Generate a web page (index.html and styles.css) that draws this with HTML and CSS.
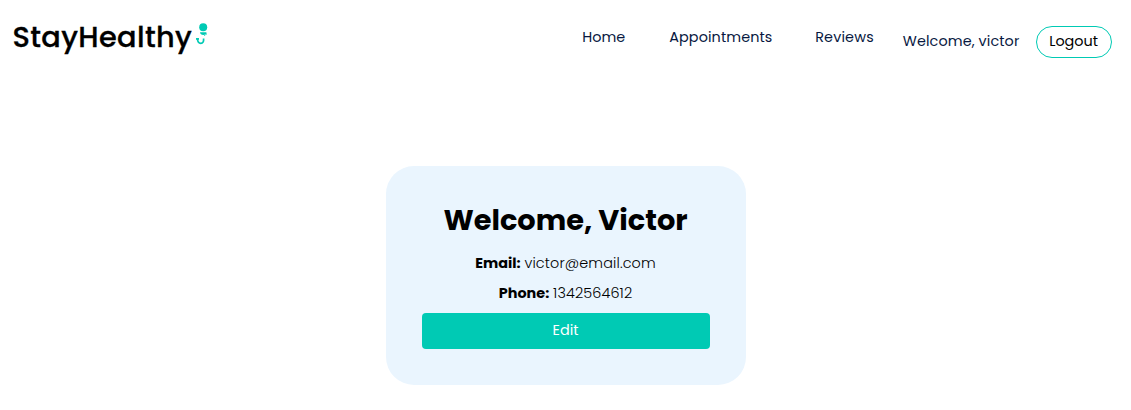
FILE: index.html
```html
<!DOCTYPE html>
<html lang="en">
<head>
<meta charset="utf-8">
<title>StayHealthy</title>
<link rel="stylesheet" href="styles.css">
</head>
<body>
<header class="navbar">
  <a class="logo"><span class="logo-text">StayHealthy</span><svg class="logo-icon" width="14" height="24" viewBox="0 0 14 24" fill="#00cab4">
    <circle cx="8.200" cy="4.300" r="4"/>
    <path d="M5 9.200h6.500c-.3 2-1.200 2.700-3.200 2.700S5.300 11.200 5 9.200z"/>
    <path d="M9.300 12.600l3-2.200" fill="none" stroke="#00cab4" stroke-width="1" stroke-dasharray="1.400 .5"/>
    <path d="M2.500 15.800c.1 3.300 1.400 4.600 3.300 4.600 2 0 3.100-1.600 2.800-4.900" fill="none" stroke="#00cab4" stroke-width="1.700"/>
    <path d="M1 15h3v1.800H1z"/>
  </svg></a>
  <nav class="menu">
    <a class="link home">Home</a>
    <a class="link appointments">Appointments</a>
    <a class="link reviews">Reviews</a>
    <span class="link greeting">Welcome, victor</span>
    <button class="logout">Logout</button>
  </nav>
</header>
<main class="page">
  <section class="card">
    <h1 class="title">Welcome, Victor</h1>
    <p class="detail email"><b>Email:</b> <span class="value">victor@email.com</span></p>
    <p class="detail phone"><b>Phone:</b> <span class="value">1342564612</span></p>
    <button class="edit">Edit</button>
  </section>
</main>
</body>
</html>
```
FILE: styles.css
```css
* { box-sizing: border-box; margin: 0; padding: 0; }
body {
  background: #fff;
  color: #000;
  font-family: Poppins, Inter, "Liberation Sans", sans-serif;
  font-size: 14.4px;
}
.navbar {
  height: 80px;
  padding: 16px 19.4px 0 12.5px;
  display: flex;
  justify-content: space-between;
  align-items: flex-start;
}
.logo { display: flex; align-items: flex-start; }
.logo-text {
  width: 182.5px;
  font-size: 28.8px;
  font-weight: 500;
  line-height: 42px;
  letter-spacing: 0.35px;
  -webkit-text-stroke: 0.3px #000;
  white-space: nowrap;
}
.logo-icon { margin-top: 7px; }
.menu { display: flex; align-items: flex-start; padding-top: 10px; }
.link { color: #08183f; line-height: 22px; white-space: nowrap; }
.home { width: 87px; }
.appointments { width: 146px; letter-spacing: 0.1px; }
.reviews { width: 87.6px; letter-spacing: 0.15px; }
.greeting { width: 132.8px; margin-top: 4px; letter-spacing: 0.1px; }
.logout {
  width: 76px;
  height: 32px;
  border: 1px solid #00cab4;
  border-radius: 16px;
  background: #fff;
  color: #000;
  font: inherit;
  line-height: 28px;
  padding-bottom: 2px;
}
.page { display: flex; justify-content: center; padding-top: 86px; }
.card {
  width: 360px;
  height: 219px;
  padding: 36px;
  border-radius: 28px;
  background: #eaf5fe;
  text-align: center;
}
.title {
  font-size: 28.8px;
  line-height: 36px;
  font-weight: 700;
  white-space: nowrap;
}
.detail { height: 30px; line-height: 30px; white-space: nowrap; }
.title + .detail { margin-top: 10px; }
.value { font-weight: 300; letter-spacing: 0.13px; }
.edit {
  display: block;
  width: 288px;
  height: 36px;
  margin-top: 5px;
  padding-bottom: 2px;
  border: 0;
  border-radius: 4px;
  background: #00cab4;
  color: #fff;
  font: inherit;
  line-height: 34px;
}
```
